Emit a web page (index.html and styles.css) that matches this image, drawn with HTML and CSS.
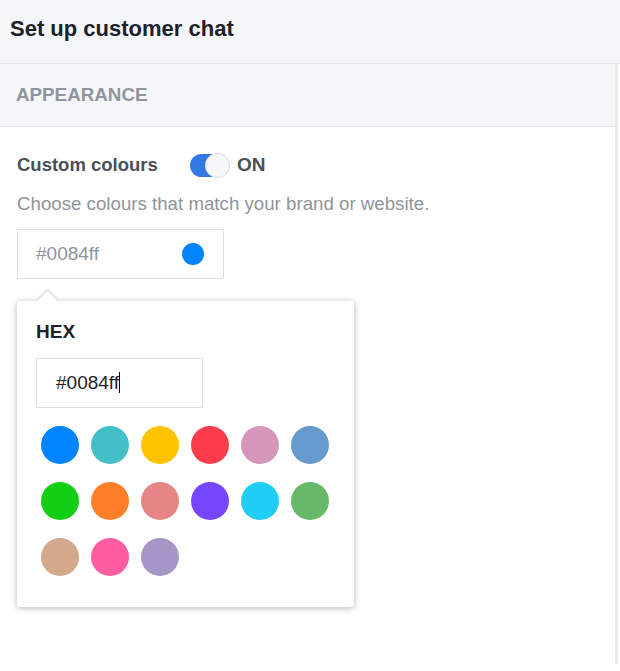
FILE: index.html
```
<!DOCTYPE html>
<html lang="en">
    <head>
        <title>Set up customer chat</title>
        <meta charset="utf-8">
        <link rel="stylesheet" href="styles.css">
    </head>
    <body>
        <div class="topbar">Set up customer chat</div>
        <div class="panel">
            <div class="section">Appearance</div>
            <div class="content">
                <div class="row">
                    <span class="label">Custom colours</span>
                    <span class="toggle"><span class="knob"></span></span>
                    <span class="state">ON</span>
                </div>
                <div class="hint">Choose colours that match your brand or website.</div>
                <div class="field">
                    <div class="picker">
                        <span class="value">#0084ff</span>
                        <span class="dot"></span>
                    </div>
                    <div class="popover">
                        <div class="hex-label">HEX</div>
                        <div class="hex-input">#0084ff<span class="caret"></span></div>
                        <div class="swatches">
                            <span class="swatch" style="background:#0084ff"></span>
                            <span class="swatch" style="background:#44bec7"></span>
                            <span class="swatch" style="background:#ffc300"></span>
                            <span class="swatch" style="background:#fa3c4c"></span>
                            <span class="swatch" style="background:#d696bb"></span>
                            <span class="swatch" style="background:#6699cc"></span>
                            <span class="swatch" style="background:#13cf13"></span>
                            <span class="swatch" style="background:#ff7e29"></span>
                            <span class="swatch" style="background:#e68585"></span>
                            <span class="swatch" style="background:#7646ff"></span>
                            <span class="swatch" style="background:#20cef5"></span>
                            <span class="swatch" style="background:#67b868"></span>
                            <span class="swatch" style="background:#d4a88c"></span>
                            <span class="swatch" style="background:#ff5ca1"></span>
                            <span class="swatch" style="background:#a695c7"></span>
                        </div>
                    </div>
                </div>
            </div>
        </div>
    </body>
</html>
```
FILE: styles.css
```
body {
    margin: 0;
    background: #fff;
    font-family: "Liberation Sans", Arial, sans-serif;
}
.topbar {
    height: 63px;
    background: #f5f6f7;
    border-bottom: 1px solid #e2e4e7;
    padding-left: 10px;
    font: bold 22px/57px "Liberation Sans", Arial, sans-serif;
    color: #1d2129;
}
.panel {
    width: 615px;
    height: 600px;
    border-right: 3px solid #e9ebee;
}
.section {
    height: 62px;
    background: #f5f6f7;
    border-bottom: 1px solid #dddfe2;
    padding-left: 16px;
    font: bold 18.8px/62px "Liberation Sans", Arial, sans-serif;
    color: #90949c;
    text-transform: uppercase;
}
.content {
    padding: 24px 17px 0;
}
.row {
    display: flex;
    align-items: center;
    height: 28px;
}
.label {
    font-weight: bold;
    font-size: 18.5px;
    color: #4b4f56;
    width: 173px;
}
.toggle {
    width: 39px;
    height: 23px;
    border-radius: 12px;
    background: #3578e5;
    position: relative;
    margin-right: 8px;
}
.knob {
    position: absolute;
    right: 0;
    top: 0;
    width: 23px;
    height: 23px;
    border-radius: 50%;
    background: #f5f6f7;
    box-shadow: 0 0 0 1px #dadde1;
}
.state {
    font-weight: bold;
    font-size: 19px;
    color: #4b4f56;
}
.hint {
    margin-top: 14px;
    font-size: 18.7px;
    line-height: 22px;
    color: #90949c;
}
.field {
    position: relative;
    margin-top: 14px;
}
.picker {
    width: 207px;
    height: 50px;
    border: 1px solid #dddfe2;
    display: flex;
    align-items: center;
    justify-content: space-between;
    padding: 0 19px 0 18px;
    box-sizing: border-box;
}
.value {
    font-size: 19px;
    color: #90949c;
}
.dot {
    width: 22px;
    height: 22px;
    border-radius: 50%;
    background: #0084ff;
}
.popover {
    position: absolute;
    left: 0;
    top: 72px;
    width: 337px;
    height: 306px;
    box-sizing: border-box;
    background: #fff;
    border-radius: 3px;
    box-shadow: 0 1px 6px rgba(0,0,0,0.3);
    padding: 20px 19px;
}
.popover::before {
    content: "";
    position: absolute;
    left: 24px;
    top: -7px;
    width: 13px;
    height: 13px;
    background: #fff;
    transform: rotate(45deg);
    box-shadow: -2px -2px 3px rgba(0,0,0,0.12);
}
.hex-label {
    font-weight: bold;
    font-size: 19px;
    color: #1d2129;
    line-height: 22px;
}
.hex-input {
    margin-top: 15px;
    width: 167px;
    height: 50px;
    box-sizing: border-box;
    border: 1px solid #dddfe2;
    padding-left: 19px;
    font-size: 19px;
    line-height: 48px;
    color: #1d2129;
}
.caret {
    display: inline-block;
    width: 1px;
    height: 21px;
    background: #000;
    vertical-align: middle;
    margin-top: -3px;
}
.swatches {
    display: grid;
    grid-template-columns: repeat(6, 38px);
    column-gap: 12px;
    row-gap: 18px;
    margin-top: 18px;
    padding-left: 5px;
}
.swatch {
    width: 38px;
    height: 38px;
    border-radius: 50%;
}
```
